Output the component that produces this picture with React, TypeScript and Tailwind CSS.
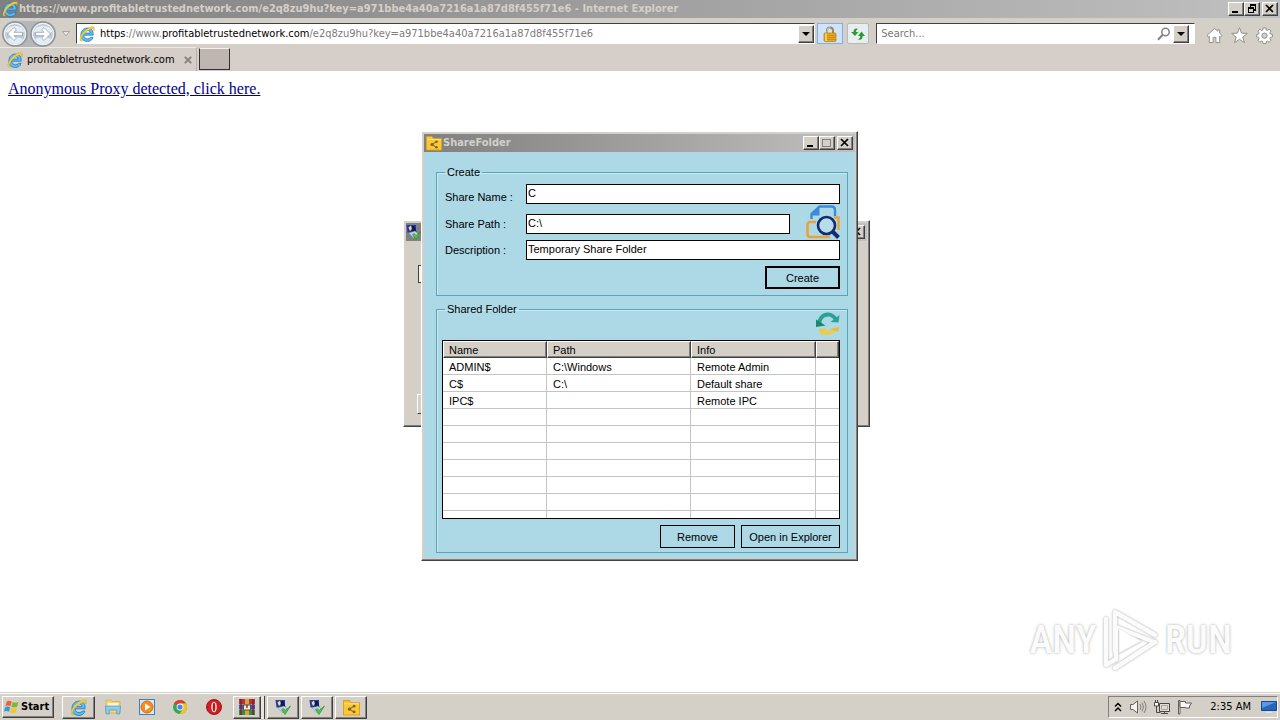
import type { ReactNode } from "react";

const raised =
  "border border-t-white border-l-white border-r-[#404040] border-b-[#404040] bg-[#d4d0c8] shadow-[inset_-1px_-1px_0_#808080]";

function IeLogo({ className }: { className: string }) {
  return (
    <svg viewBox="0 0 16 16" className={className} aria-hidden="true">
      <path transform="translate(-1.400 -1.600) scale(1.200)" d="M13 9H5.200c.1 2 1.400 3 3.100 3 1.200 0 2-.5 2.500-1.200h2.100C12 13.300 10.300 14.300 8.200 14.300 5 14.300 2.700 12 2.700 8.700c0-3.300 2.300-5.700 5.500-5.700C11.500 3 13.400 5.500 13 9Zm-2.500-1.800C10.300 5.900 9.500 5.100 8.100 5.100S5.700 5.900 5.300 7.200Z" fill="#5bbcf0" stroke="#1676c0" strokeWidth=".6" />
      <path d="M2.500 15.200C-.8 14.500 1.600 8 6.300 4 10.500.6 15 -.4 15.500 1.800c.2 1-.3 2.300-.8 3.200.3-1.800 0-2.600-1.500-2.200C10 3.500 4.600 7.400 3 11.200c-.7 1.700-.8 3.300.8 3.400Z" fill="#f6cf3c" stroke="#b98f1a" strokeWidth=".3" />
    </svg>
  );
}

function FolderShareIcon({ className }: { className: string }) {
  return (
    <svg viewBox="0 0 16 16" className={className} aria-hidden="true">
      <path d="M.5 1.500h5.500l1.500 2h8v11.500H.5Z" fill="#fcc934" stroke="#dba21c" />
      <path d="M1 4.500h14" stroke="#fde28a" />
      <path d="M10.500 6.500 6 9.500l4.500 3" fill="none" stroke="#94783a" strokeWidth="1.200" />
      <circle cx="10.500" cy="6.800" r="1.300" fill="#7a6430" />
      <circle cx="6" cy="9.500" r="1.600" fill="#7a6430" />
      <circle cx="10.500" cy="12.200" r="1.300" fill="#7a6430" />
    </svg>
  );
}

function CheckAppIcon({ className }: { className: string }) {
  return (
    <svg viewBox="0 0 16 16" className={className} aria-hidden="true">
      <path d="M.5 1h9.500v7.500H1.500Z" fill="#2434b4" />
      <path d="M2.500 3.500 5 1.500l1.500 3L4 7Z" fill="#f5e06a" />
      <path d="M5.500 2h3l2 6H6Z" fill="#0d1a58" />
      <path d="m3 9 6-2 4 4-6 2.500Z" fill="#c4d3e8" stroke="#7890b5" strokeWidth=".5" />
      <path d="m6.500 10.500 3.500 5L15.500 7 10 11.500l-1.700-2Z" fill="#4cc748" stroke="#218723" strokeWidth=".6" />
    </svg>
  );
}

type Glyph = "min" | "max" | "restore" | "close";

function CaptionButton({ glyph, label, dim = false }: { glyph: Glyph; label: string; dim?: boolean }) {
  const color = dim ? "#808080" : "#000";
  return (
    <button type="button" aria-label={label} className={`flex h-[14px] w-4 items-center justify-center ${raised}`}>
      <svg viewBox="0 0 12 10" className="h-[10px] w-3 shrink-0" fill="none" stroke={color} shapeRendering="crispEdges">
        {glyph === "min" && <path d="M2 8h6" strokeWidth="2" />}
        {glyph === "max" && <path d="M1.500 1v7.500h8V1M1 1.500h9" />}
        {glyph === "restore" && <path d="M4 1h6M4.500 1v2M9.500 1v5H8M2 4h6M2.500 4v4.500h5V4" strokeWidth="1.300" />}
        {glyph === "close" && <path d="m2 1 7 7m0-7-7 7" strokeWidth="1.700" shapeRendering="auto" />}
      </svg>
    </button>
  );
}

function DropButton({ label }: { label: string }) {
  return (
    <button type="button" aria-label={label} className={`flex h-[18px] w-4 shrink-0 items-center justify-center ${raised}`}>
      <svg viewBox="0 0 8 4" className="h-1 w-2">
        <path d="M0 0h8L4 4Z" fill="#000" />
      </svg>
    </button>
  );
}

function NavArrow({ label, flip = false }: { label: string; flip?: boolean }) {
  return (
    <button type="button" aria-label={label} className="shrink-0">
      <svg viewBox="0 0 26 26" className="size-[26px]">
        <circle cx="13" cy="13" r="12" fill="#dce4ea" stroke="#8d9399" strokeWidth="1.500" />
        <circle cx="13" cy="13" r="10.500" fill="#bccbd7" stroke="#f7fafc" />
        <path d="M3.500 11a10 9 0 0 1 19 0q-9 3-19 0Z" fill="#e6ecf1" />
        <path d="M5 18q8-4 16 0-3 5-8 5t-8-5Z" fill="#e3edf4" />
        <path
          transform={flip ? "rotate(180 13 13)" : undefined}
          d="m5.500 13 6.500-6.500 2.500 2.300-2.500 2.500H20.500v3.400H12l2.500 2.500L12 19.500Z"
          fill="#fff"
          stroke="#8fa0ae"
          strokeWidth=".8"
        />
      </svg>
    </button>
  );
}

function BrowserChrome() {
  return (
    <header className="shrink-0 bg-[#d4d0c8]">
      <div className="flex h-[18px] items-center bg-gradient-to-r from-[#808080] to-[#c0c0c0] pr-[2px] pl-[2px]">
        <IeLogo className="size-4 shrink-0" />
        <h1 className="ml-[1px] flex-1 truncate text-[11px] leading-[18px] font-bold text-[#d4d0c8]">
          https://www.profitabletrustednetwork.com/e2q8zu9hu?key=a971bbe4a40a7216a1a87d8f455f71e6 - Internet Explorer
        </h1>
        <div className="flex">
          <CaptionButton glyph="min" label="Minimize" />
          <CaptionButton glyph="restore" label="Restore" />
          <span className="w-[2px]" />
          <CaptionButton glyph="close" label="Close" />
        </div>
      </div>

      <nav className="flex h-[29px] items-center pt-[2px] pr-[7px] pl-[2px]">
        <div className="flex rounded-full bg-[#b5b8ba]">
          <NavArrow label="Back" />
          <span className="w-[2px]" />
          <NavArrow label="Forward" flip />
        </div>
        <button type="button" aria-label="Recent pages" className="mx-[6px]">
          <svg viewBox="0 0 8 6" className="h-[6px] w-2">
            <path d="M.5.5h7L4 5Z" fill="#e8e6e2" stroke="#aaa49c" />
          </svg>
        </button>
        <div className="flex h-[21px] min-w-0 flex-[743] items-center border border-t-[#404040] border-r-white border-b-white border-l-[#404040] bg-white pl-[2px]">
          <IeLogo className="size-4 shrink-0" />
          <span className="ml-[5px] block h-[18px] min-w-0 flex-1 text-[11px] leading-[18px] whitespace-nowrap text-[#7b7b7b]">
            <span className="text-black">https</span>://www.<span className="text-black">profitabletrustednetwork.com</span>
            /e2q8zu9hu?key=a971bbe4a40a7216a1a87d8f455f71e6
          </span>
          <DropButton label="Show address list" />
        </div>
        <button type="button" aria-label="Security report" className="ml-[2px] flex h-[21px] w-[26px] items-center justify-center border border-[#7fb0e4] bg-[#cfe3fb]">
          <svg viewBox="0 0 14 16" className="h-4 w-[14px]">
            <path d="M4 8V4.500a3 3 0 0 1 6 0V8" fill="none" stroke="#9b8a58" strokeWidth="2" />
            <path d="M4.200 8V4.500a2.800 2.800 0 0 1 3-2.800" fill="none" stroke="#d8cfae" />
            <rect x="1" y="7" width="12" height="8.500" rx="1" fill="#e9a91b" stroke="#b57a0b" strokeWidth=".7" />
            <path d="M1.500 9.500h11M1.500 11.500h11M1.500 13.500h11" stroke="#b97b0c" strokeWidth=".6" />
            <path d="M3 7.500v7.500" stroke="#f9dc74" strokeWidth="1.500" />
          </svg>
        </button>
        <button type="button" aria-label="Refresh" className="ml-1 flex h-[21px] w-[22px] items-center justify-center rounded-[2px] border border-[#b4bac0] bg-[#e8edf0]">
          <svg viewBox="0 0 16 14" className="h-[14px] w-4 shrink-0" fill="#2f9a35">
            <path d="M8 2C5 .8 3.500 2.500 3.500 5H1l4 4 3.500-4H6c0-1.500.5-2.300 2-3Z" />
            <path d="M8 12.500c3 1 4.700-.7 4.700-3.500H15l-3.500-4.500L8 9h2.200c0 1.600-.6 2.600-2.200 3.500Z" />
          </svg>
        </button>
        <div className="ml-[7px] flex h-[21px] min-w-0 flex-[315] items-center border border-t-[#404040] border-r-white border-b-white border-l-[#404040] bg-white pr-[5px]">
          <input type="search" aria-label="Search" placeholder="Search..." className="h-[18px] min-w-0 flex-1 bg-transparent pl-1 text-[11px] outline-none placeholder:text-[#777]" />
          <svg viewBox="0 0 14 14" className="mr-[2px] size-[14px]" fill="none" stroke="#838383">
            <circle cx="8.500" cy="5" r="3.700" strokeWidth="1.500" />
            <path d="M5.800 7.800 1 12.800" strokeWidth="2" />
          </svg>
          <DropButton label="Search providers" />
        </div>
        <div className="ml-[11px] flex items-center gap-2 pt-1">
          <button type="button" aria-label="Home">
            <svg viewBox="0 0 18 18" className="size-[17px]" fill="#fff" stroke="#8e8a85" strokeWidth="1">
              <path d="M9 1.500 1 9l1.500 1.500 1-.8V16.500h4V11h3v5.500h4V9.700l1 .8L17 9l-2.500-2.500V3h-2v1.500Z" />
            </svg>
          </button>
          <button type="button" aria-label="Favorites">
            <svg viewBox="0 0 18 18" className="size-[17px]" fill="#fff" stroke="#8e8a85" strokeWidth="1">
              <path d="m9 .8 2.200 5.700 6.100.3-4.800 3.800 1.700 5.900L9 13.100l-5.200 3.400 1.700-5.900L.7 6.800l6.100-.3Z" />
            </svg>
          </button>
          <button type="button" aria-label="Tools">
            <svg viewBox="0 0 18 18" className="size-[17px]" fill="#fff" stroke="#8e8a85" strokeWidth="1">
              <path d="M7.500 1h3l.4 2.200 1.100.5 1.900-1.300 2 2-1.200 1.900.5 1.200 2.200.4v2.700l-2.200.4-.5 1.200 1.200 1.900-2 2-1.900-1.200-1.100.5-.4 2.100h-3l-.4-2.100-1.200-.5-1.800 1.200-2-2 1.200-1.900-.5-1.200L.7 10.600V7.900l2.100-.4.5-1.200-1.200-1.900 2-2L6 3.700l1.100-.5Z" />
              <circle cx="9" cy="9.200" r="2.800" fill="#d4d0c8" />
            </svg>
          </button>
        </div>
      </nav>

      <div className="flex h-6 bg-[#d6cec9]">
        <div className="flex w-[197px] items-center border-t border-r border-t-[#ece9e4] border-r-[#b5aeaa] bg-[#d4cdc8] pr-1 pl-[7px]">
          <IeLogo className="size-4 shrink-0" />
          <span className="ml-1 flex-1 text-[11px] leading-6 whitespace-nowrap">profitabletrustednetwork.com</span>
          <button type="button" aria-label="Close tab">
            <svg viewBox="0 0 8 8" className="size-2" stroke="#857f7b" strokeWidth="1.800">
              <path d="m.8.800 6.400 6.400m0-6.400L.8 7.200" />
            </svg>
          </button>
        </div>
        <button type="button" aria-label="New tab" className="mt-[1px] ml-[2px] h-[22px] w-[31px] border border-t-[#f4f0ec] border-r-[#303030] border-b-[#303030] border-l-[#303030] bg-[#bfb5b1]" />
      </div>
    </header>
  );
}

function BackgroundWindow() {
  return (
    <section aria-label="Setup" className={`absolute top-[220px] left-[403px] h-[207px] w-[467px] p-[2px] ${raised}`}>
      <div className="flex h-[18px] items-center justify-between bg-gradient-to-r from-[#808080] to-[#c0c0c0] pr-[2px]">
        <CheckAppIcon className="size-4" />
        <CaptionButton glyph="close" label="Close" />
      </div>
      <div className="mt-6 ml-3 h-[18px] w-40 border border-[#404040] bg-[#f4f2ee]" />
      <div className="mt-[111px] ml-[11px] h-5 w-20 border border-t-white border-r-[#404040] border-b-[#404040] border-l-white" />
    </section>
  );
}

const shares = [
  ["ADMIN$", "C:\\Windows", "Remote Admin"],
  ["C$", "C:\\", "Default share"],
  ["IPC$", "", "Remote IPC"],
  ...Array.from({ length: 7 }, () => ["", "", ""]),
];

const columns = ["Name", "Path", "Info", ""];

type FormRowProps = { id: string; label: string; value: string; className: string; children?: ReactNode };

function FormRow({ id, label, value, className, children }: FormRowProps) {
  return (
    <div className={`flex ${className}`}>
      <label htmlFor={id} className="w-[81px] shrink-0">
        {label}
      </label>
      <input id={id} type="text" defaultValue={value} className="h-5 min-w-0 flex-1 border border-black bg-white px-[1px] pb-[2px] outline-none" />
      {children}
    </div>
  );
}

function ShareFolderWindow() {
  const groupBox = "border border-[#5ca3b8] shadow-[inset_1px_1px_0_#c9e9f2]";
  const flatButton = "border border-black bg-[#add8e6] text-center";
  return (
    <section
      aria-label="ShareFolder"
      className={`absolute top-[131px] left-[421px] w-[437px] p-[2px] font-['Liberation_Sans',Arial,sans-serif] text-[11px] leading-[14px] text-black ${raised}`}
    >
      <div className="flex h-[18px] items-center bg-gradient-to-r from-[#808080] to-[#c0c0c0] px-[2px]">
        <FolderShareIcon className="size-4" />
        <h2 className="ml-[1px] flex-1 font-['DejaVu_Sans_Condensed','DejaVu_Sans',sans-serif] font-bold text-[#d4d0c8]">ShareFolder</h2>
        <div className="flex">
          <CaptionButton glyph="min" label="Minimize" />
          <CaptionButton glyph="max" label="Maximize" dim />
          <span className="w-[2px]" />
          <CaptionButton glyph="close" label="Close" />
        </div>
      </div>

      <div className="bg-[#add8e6] pt-[13px] pr-[7px] pb-[5px] pl-3">
        <fieldset className={`pr-[7px] pb-[6px] pl-2 ${groupBox}`}>
          <legend className="px-[2px]">Create</legend>
          <div className="flex flex-col pt-[5px]">
            <FormRow id="share-name" label="Share Name :" value="C" className="h-5 items-end" />
            <FormRow id="share-path" label="Share Path :" value="C:\" className="my-[1px] items-center pt-1">
              <button type="button" aria-label="Browse" className="-mt-1 ml-4 shrink-0">
                <svg viewBox="0 0 34 34" className="size-[34px]" fill="none">
                  <path d="M5.500 14V9l8-7.500h12q3.500 0 3.500 3.500v6" stroke="#3b8bd6" strokeWidth="2.400" />
                  <path d="M4.500 10.500 13.500 1v9.500Z" fill="#3b8bd6" />
                  <path d="M10 17H4q-2.500 0-2.500 3v9q0 3 3 3H24" stroke="#eba238" strokeWidth="2.600" />
                  <path d="M28 12.500h4.500V25" stroke="#eba238" strokeWidth="2.400" />
                  <circle cx="20.500" cy="20.500" r="8.500" fill="#b9dced" stroke="#142c6b" strokeWidth="2.600" />
                  <path d="m26 26 6.500 6.500" stroke="#142c6b" strokeWidth="4" />
                </svg>
              </button>
            </FormRow>
            <FormRow id="share-description" label="Description :" value="Temporary Share Folder" className="items-center" />
            <button type="button" className="mt-[6px] h-[23px] w-[75px] self-end border-2 border-black">
              Create
            </button>
          </div>
        </fieldset>

        <fieldset className={`mt-[6px] pr-[7px] pb-1 pl-[5px] ${groupBox}`}>
          <legend className="ml-[3px] px-[2px]">Shared Folder</legend>
          <div className="flex h-6 items-start justify-end">
            <button type="button" aria-label="Refresh shares" className="-mt-1">
              <svg viewBox="0 0 24 24" className="size-6" fill="none">
                <path d="M3.500 11a8.500 8.500 0 0 1 16-4" stroke="#2aa198" strokeWidth="4" />
                <path d="m23.500 3-1 7.500-8-.5Z" fill="#2aa198" />
                <path d="M0 7.500 0 15l9.500-1.500Z" fill="#178c6c" />
                <path d="M19.500 16.500A9.500 8 0 0 1 7 20" stroke="#efcb42" strokeWidth="4" />
                <path d="m2.500 17 8-.5-5 7.500Z" fill="#efcb42" />
                <path d="m14 17 9-2-1 5Z" fill="#e8bc35" />
              </svg>
            </button>
          </div>
          <div className="h-[179px] overflow-hidden border border-black bg-white">
            <table className="w-full table-fixed border-separate border-spacing-0 text-left">
              <colgroup>
                <col className="w-[104px]" />
                <col className="w-36" />
                <col className="w-[125px]" />
                <col />
              </colgroup>
              <thead>
                <tr>
                  {columns.map((name, i) => (
                    <th key={i} className={`h-[17px] pt-[1px] pb-0 pl-[5px] leading-[14px] font-normal ${raised}`}>
                      {name}
                    </th>
                  ))}
                </tr>
              </thead>
              <tbody>
                {shares.map((row, r) => (
                  <tr key={r}>
                    {row.map((cell, c) => (
                      <td key={c} className="h-[17px] border-r border-b border-[#c4c4c4] pt-[2px] pb-0 pl-[6px]">
                        {cell}
                      </td>
                    ))}
                    <td className="border-b border-[#c4c4c4] p-0" />
                  </tr>
                ))}
              </tbody>
            </table>
          </div>
          <div className="mt-[6px] flex justify-end gap-[6px]">
            <button type="button" className={`h-[23px] w-[75px] ${flatButton}`}>
              Remove
            </button>
            <button type="button" className={`h-[23px] w-[99px] ${flatButton}`}>
              Open in Explorer
            </button>
          </div>
        </fieldset>
      </div>
    </section>
  );
}

function Watermark() {
  return (
    <div className="absolute right-[48px] bottom-[47px] flex items-center gap-[5px] font-['Roboto_Condensed','Liberation_Sans',sans-serif] text-[39px] leading-[64px] font-medium text-[#fbfbfb] [text-shadow:0_0_3px_#a8a8a8]">
      <span>ANY</span>
      <svg viewBox="0 0 58 66" className="h-[66px] w-[58px] drop-shadow-[0_0_1px_#a0a0a0]" fill="none" stroke="#fbfbfb" strokeWidth="4.500" strokeLinejoin="round" strokeLinecap="round">
        <path d="M13 44V5l40 23M53 35 13 61M4 12v46l10-6V20l38 15" />
        <path d="M17 22v24l22-12Z" fill="#fff" stroke="#ececec" strokeWidth="1" />
      </svg>
      <span>RUN</span>
    </div>
  );
}

function TaskButton({ label, stacked = false, children }: { label: string; stacked?: boolean; children: ReactNode }) {
  return (
    <button
      type="button"
      aria-label={label}
      className={`flex h-[23px] items-center ${stacked ? "w-7" : "w-8"} justify-center ${raised}`}
    >
      {children}
    </button>
  );
}

function Taskbar() {
  return (
    <footer className="flex h-7 shrink-0 items-center border-t border-[#d4d0c8] bg-[#d4d0c8] pt-[1px] pr-[2px] pl-[2px] shadow-[inset_0_1px_0_#fff]">
      <button type="button" className={`flex h-[22px] w-[52px] items-center gap-[1px] pl-[1px] text-[11px] font-bold ${raised}`}>
        <svg viewBox="0 0 16 16" className="size-4 shrink-0">
          <path d="M2.800 2.300Q5 1 7.700 2.600L6.500 7.200Q4 5.700 1.500 7Z" fill="#ef6231" />
          <path d="M8.600 3.100Q11 4.500 14.500 3l-1.300 4.700Q10 9 7.500 7.800Z" fill="#78b936" />
          <path d="M1.200 8Q3.800 6.700 6.200 8.200L5 12.800Q2.500 11.500 0 12.600Z" fill="#369bd9" />
          <path d="M7.200 8.800q2.500 1.300 5.700.1l-1.300 4.600Q8.300 14.800 6 13.400Z" fill="#f6c42c" />
        </svg>
        Start
      </button>
      <div className="ml-2 flex items-center">
        <button type="button" aria-label="Internet Explorer" className={`flex h-[23px] w-[33px] items-center justify-center ${raised}`}>
          <IeLogo className="size-[17px]" />
        </button>
        <button type="button" aria-label="File Explorer" className="ml-[9px]">
          <svg viewBox="0 0 18 18" className="size-[18px]">
            <path d="M2 2h5l1 1.500h8V15H2Z" fill="#f4d66d" stroke="#c8a23b" strokeWidth=".6" />
            <path d="M3.500 5h11v4h-11Z" fill="#fff6cf" />
            <path d="M1.500 8h15l-.8 8h-2.900v-4H5.300v4H2.200Z" fill="#8ccced" stroke="#4e97c0" strokeWidth=".7" />
          </svg>
        </button>
        <button type="button" aria-label="Media Player" className="ml-4">
          <svg viewBox="0 0 18 18" className="size-[18px]">
            <rect x="1.500" y="1.500" width="15" height="15" fill="#d5e9fa" stroke="#3e81c2" />
            <circle cx="9" cy="9" r="6" fill="#f68b1e" stroke="#d96f09" />
            <path d="m7 5.500 5.500 3.500L7 12.500Z" fill="#fff" />
          </svg>
        </button>
        <button type="button" aria-label="Chrome" className="ml-4">
          <svg viewBox="0 0 16 16" className="size-4">
            <circle cx="8" cy="8" r="7" fill="#33a852" />
            <path d="M8 8 2 4.400A7 7 0 0 1 14.100 4.600H8Z" fill="#e33b2e" />
            <path d="M8 4.600h6.100A7 7 0 0 1 7.600 15L11 9.500Z" fill="#fbc116" />
            <circle cx="8" cy="8" r="3.400" fill="#fff" />
            <circle cx="8" cy="8" r="2.600" fill="#4285f4" />
          </svg>
        </button>
        <button type="button" aria-label="Opera" className="ml-[17px]">
          <svg viewBox="0 0 18 18" className="size-[18px]">
            <circle cx="9" cy="9" r="7.500" fill="#cf1d20" stroke="#a31417" />
            <ellipse cx="9" cy="9" rx="2.800" ry="5.200" fill="#f3e6e4" />
            <ellipse cx="9" cy="9" rx="1.300" ry="4.200" fill="#b5181b" />
          </svg>
        </button>
        <div className="ml-[10px] flex">
          <TaskButton label="WinRAR" stacked>
            <svg viewBox="0 0 18 18" className="size-[18px]">
              <path d="M1 1h16v5H1Z" fill="#b53436" />
              <path d="M1 6.500h16v5H1Z" fill="#3c59b8" />
              <path d="M1 12h16v5H1Z" fill="#358e3f" />
              <path d="M3 1v16M15 1v16" stroke="#772339" strokeWidth="1.500" />
              <path d="M7 1h4v16H7Z" fill="#d9a23d" />
              <path d="M5.500 7h7v5h-7Z" fill="#f4eadb" stroke="#5e4b35" />
              <path d="M9 7v3" stroke="#5e4b35" strokeWidth="1.500" />
            </svg>
          </TaskButton>
          <span className="h-[23px] w-1 border-r border-[#404040] bg-[#e8e5df]" />
        </div>
        <div className="ml-[2px] flex gap-[2px]">
          <TaskButton label="Setup">
            <CheckAppIcon className="size-4" />
          </TaskButton>
          <TaskButton label="Setup progress">
            <CheckAppIcon className="size-4" />
          </TaskButton>
          <TaskButton label="ShareFolder">
            <FolderShareIcon className="size-[17px]" />
          </TaskButton>
        </div>
      </div>

      <div className="ml-auto flex h-[22px] items-center border border-t-[#808080] border-r-white border-b-white border-l-[#808080] pl-[5px]">
        <button type="button" aria-label="Show hidden icons">
          <svg viewBox="0 0 8 10" className="h-[10px] w-2" fill="none" stroke="#000" strokeWidth="1.500">
            <path d="m1 4.500 3-3 3 3M1 9l3-3 3 3" />
          </svg>
        </button>
        <svg viewBox="0 0 18 16" className="ml-[7px] h-4 w-[18px]" fill="none" stroke="#66625e">
          <path d="M1.500 5.500H4L8.500 2v12L4 10.500H1.500Z" fill="#f5f4f2" />
          <path d="M11 5q2 3 0 6M13 3.500q3 4.500 0 9M15 2q4 6 0 12" stroke="#827e79" />
        </svg>
        <svg viewBox="0 0 18 16" className="ml-[6px] h-4 w-[18px]" fill="none" stroke="#4c4945">
          <path d="M6.500 4.500h10v8h-10Z" fill="#dedbd6" />
          <path d="M8.500 6.500h6v4h-6Z" stroke="#aaa69f" />
          <path d="M8 14.500h7M11.500 12.500v2M3.500 7v6.500h4" />
          <path d="M1.500 3.500h4V7h-4ZM2.500 1v2M4.500 1v2" fill="#fff" />
        </svg>
        <svg viewBox="0 0 18 16" className="ml-[6px] h-4 w-[18px]" fill="#f7f6f4" stroke="#625f5b">
          <path d="M1.500 15V1.500H3V15Z" />
          <path d="M3 2.500h5.500V4h6l-2 3 0 2H8.500V8.500H3Z" />
        </svg>
        <time className="ml-[15px] text-[11px] whitespace-nowrap">2:35 AM</time>
        <svg viewBox="0 0 16 16" className="ml-[10px] size-4">
          <path d="M.5 2.500h15v9H.5Z" fill="#2766bd" stroke="#17478d" />
          <path d="M1 3h14L1 9Z" fill="#5c9ae1" />
          <path d="M5 12.500h6v1.500H5Z" fill="#dce6f1" />
        </svg>
      </div>
    </footer>
  );
}

export default function App() {
  return (
    <div className="relative flex min-h-screen flex-col bg-white font-['DejaVu_Sans_Condensed','DejaVu_Sans',sans-serif] text-black">
      <BrowserChrome />
      <main className="flex-1 px-2 pt-[6px] pb-2">
        <a href="#proxy" className="font-['Liberation_Serif','Times_New_Roman',serif] text-[16px] leading-[18px] text-[#00008b] underline">
          Anonymous Proxy detected, click here.
        </a>
      </main>
      <Watermark />
      <BackgroundWindow />
      <ShareFolderWindow />
      <Taskbar />
    </div>
  );
}
